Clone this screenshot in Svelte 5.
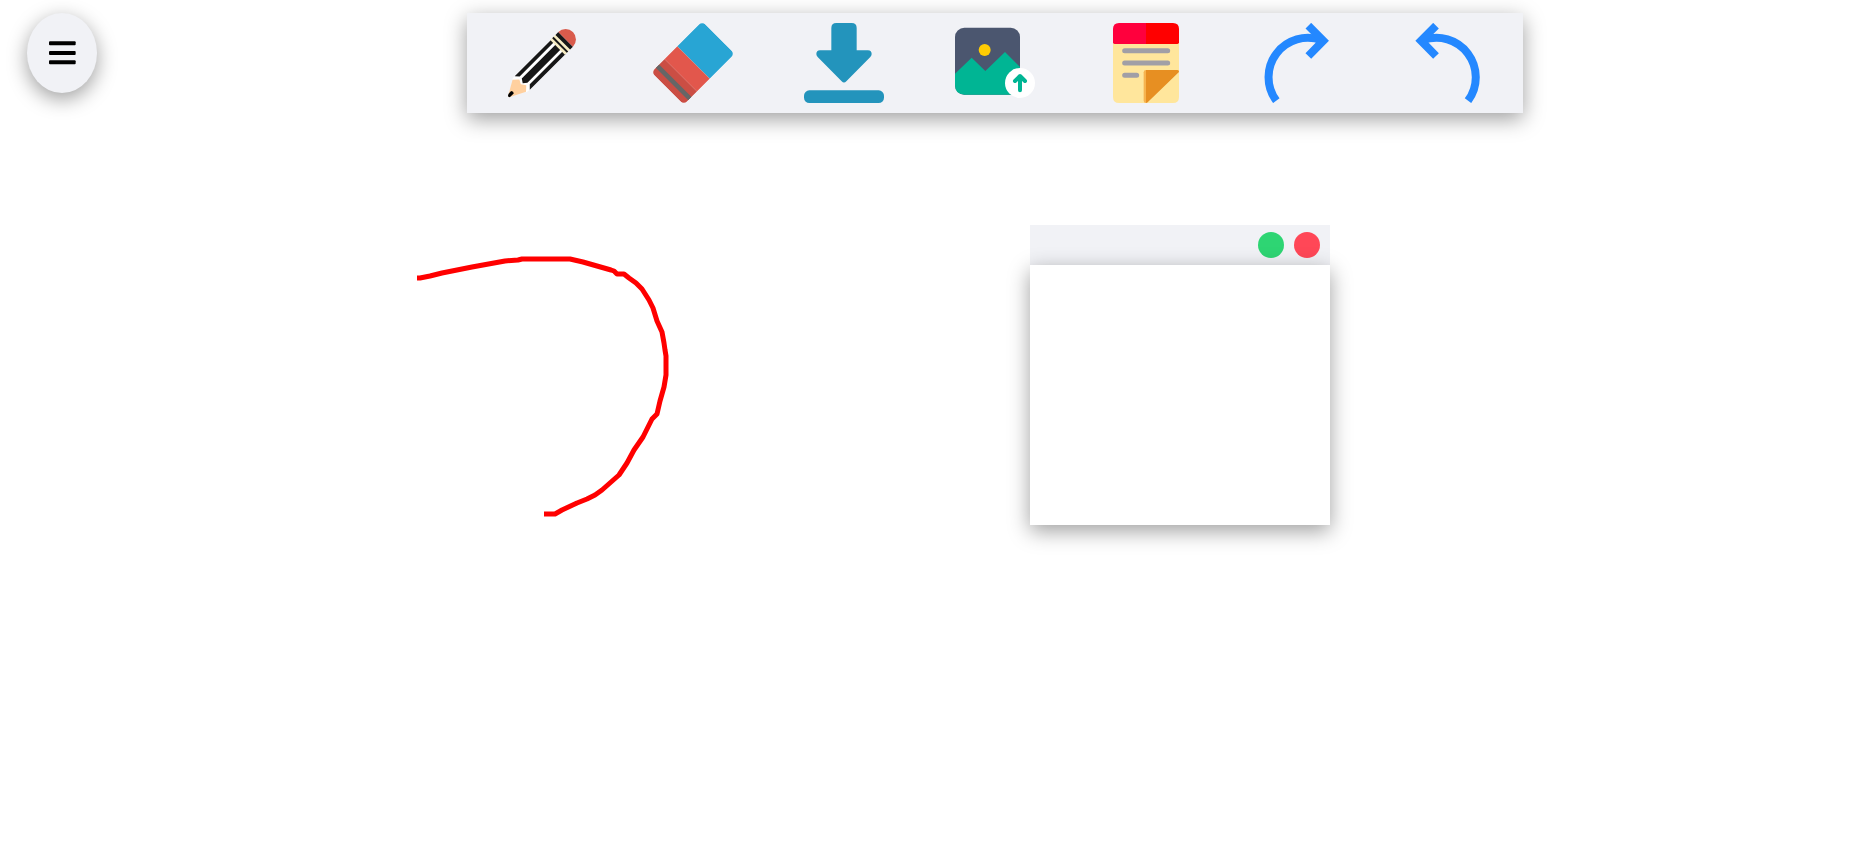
<script>
  const tools = [
    { id: 'pencil', label: 'Pencil', box: '156 69 240 240' },
    { id: 'eraser', label: 'Eraser', box: '69 69 240 240' },
    { id: 'download', label: 'Download', box: '72 69 240 240' },
    { id: 'upload', label: 'Upload image', box: '75 69 240 240' },
    { id: 'note', label: 'Sticky note', box: '48 69 240 240' },
    { id: 'redo', label: 'Redo', box: '51 69 240 240' },
    { id: 'undo', label: 'Undo', box: '51 69 240 240' }
  ];

  // Points of the freehand line, in board pixels.
  const line = [
    [417, 278], [420, 278], [430, 276], [442, 273], [472, 267], [505, 261], [518, 260],
    [522, 259], [570, 259], [583, 262], [597, 266], [611, 270], [614, 271], [617, 274],
    [624, 274], [629, 278], [636, 283], [642, 289], [649, 300], [653, 308], [657, 321],
    [662, 332], [664, 343], [665, 350], [666, 356], [666, 375], [664, 387], [660, 401],
    [657, 414], [652, 419], [643, 437], [634, 450], [627, 463], [619, 475], [602, 490],
    [595, 495], [587, 499], [577, 503], [562, 510], [555, 514], [544, 514]
  ];
  const points = line.map((p) => p.join(',')).join(' ');
</script>

<main class="board">
  <svg class="drawing" aria-hidden="true">
    <polyline {points} fill="none" stroke="#f00" stroke-width="5" stroke-linejoin="round" />
  </svg>

  <header class="top">
    <button class="menu" aria-label="Menu">
      <svg viewBox="0 0 84 84" aria-hidden="true">
        <rect x="3" y="7" width="80" height="12" rx="3" />
        <rect x="3" y="36" width="80" height="12" rx="3" />
        <rect x="3" y="64" width="80" height="12" rx="3" />
      </svg>
    </button>

    <nav class="tools" aria-label="Tools">
      {#each tools as tool (tool.id)}
        <button class="tool" aria-label={tool.label}>
          <svg viewBox={tool.box} aria-hidden="true">
            {#if tool.id === 'pencil'}
              <g transform="translate(175 290) rotate(-45)">
                <path fill="#fff" d="M45-29 57-31H212V31H60L48 29Z" />
                <path fill="#ffd09f" d="M1-2 45-27 60-13 53 0 62 14 48 27 1 3Z" />
                <path fill="#000" d="M0-1Q3-7 18-6Q23 0 18 5L2 4Z" />
                <path fill="#171717" d="M57-30H212V-19H67ZM67-10H212V11H70L59 2ZM72 19H212V31H60Z" />
                <path fill="#f6ecc3" d="M209-31H234V31H209Z" />
                <path fill="#171717" d="M217-31H223V31H217ZM231-31H243V31H231Z" />
                <path fill="#d95b4c" d="M243-31A31 31 0 0 1 243 31Z" />
              </g>
            {:else if tool.id === 'eraser'}
              <clipPath id="eraser-body"><rect x="-108" y="-69" width="216" height="138" rx="14" /></clipPath>
              <g transform="translate(189 189) rotate(-45)">
                <g clip-path="url(#eraser-body)">
                  <path fill="#28a5d4" d="M2-69H108V69H2Z" />
                  <path fill="#e2574c" d="M-52-69H2V69H-52Z" />
                  <path fill="#cb4e44" d="M-108-69H-52V69H-108Z" />
                  <path fill="#666" d="M-89-69H-75V69H-89Z" />
                </g>
              </g>
            {:else if tool.id === 'download'}
              <g fill="#2394bc">
                <rect x="72" y="271" width="240" height="38" rx="16" />
                <path d="M154 84Q154 69 169 69H215Q230 69 230 84V151H264Q275 152 275 162Q275 167 271 171L199 244Q192 251 185 244L113 171Q109 167 109 162Q109 152 120 151H154Z" />
              </g>
            {:else if tool.id === 'upload'}
              <rect x="75" y="83" width="195" height="201" rx="28" fill="#4b566f" />
              <circle cx="164" cy="150" r="18" fill="#ffcc03" />
              <path fill="#00b594" d="M75 221 125 173 166 213 225 156 270 201V284H103Q75 283 75 256Z" />
              <circle cx="270" cy="249" r="45" fill="#fff" />
              <path d="M270 271V230M255 243 270 228 285 243" fill="none" stroke="#00b594" stroke-width="12" stroke-linecap="round" stroke-linejoin="round" />
            {:else if tool.id === 'note'}
              <path fill="#ffe69c" d="M69 128H267V216L170 309H87Q69 309 69 291Z" />
              <path fill="#ff003d" d="M69 87Q69 69 87 69H168V132H74Q69 132 69 127Z" />
              <path fill="#f00" d="M168 69H249Q267 69 267 87V127Q267 132 262 132H168Z" />
              <path d="M104 152H233M104 189H233M104 226H140" stroke="#a19fa6" stroke-width="15" stroke-linecap="round" />
              <path fill="#ffe69c" d="M168 309 267 216V291Q267 309 249 309Z" />
              <path fill="#f6b34f" d="M168 210Q161 210 161 217V302Q161 309 168 309Z" />
              <path fill="#e78f22" d="M168 210H262Q268 210 267 216L173 307Q171 309 168 309Z" />
            {:else}
              <g transform={tool.id === 'undo' ? 'translate(340 0) scale(-1 1)' : undefined} fill="none" stroke="#2488ff" stroke-width="24">
                <path d="M109 302A118 118 0 0 1 245 121" />
                <path d="M205 77 250 122 205 168" />
              </g>
            {/if}
          </svg>
        </button>
      {/each}
    </nav>
  </header>

  <section class="sticky" aria-label="Note">
    <div class="bar">
      <button class="dot minimize" aria-label="Minimize"></button>
      <button class="dot close" aria-label="Close"></button>
    </div>
    <textarea class="body" aria-label="Note text"></textarea>
  </section>
</main>

<style>
  :global(body) {
    background: #fff;
    font-family: 'Liberation Sans', sans-serif;
  }

  .board {
    --panel: #f1f2f6;
    --shadow: 0 6px 20px rgba(0, 0, 0, 0.38);
    position: relative;
    min-height: 100vh;
    overflow: hidden;
  }

  button {
    padding: 0;
    border: 0;
    cursor: pointer;
  }

  .drawing {
    position: absolute;
    inset: 0;
    width: 100%;
    height: 100%;
  }

  .top {
    position: relative;
    display: grid;
    grid-template-columns: 25vw minmax(0, 1fr) 344px;
    align-items: start;
    padding-top: 13px;
  }

  .menu {
    display: grid;
    place-items: center;
    width: 70px;
    height: 80px;
    margin-left: 27px;
    border-radius: 50%;
    background: var(--panel);
    box-shadow: var(--shadow);
  }

  .menu svg {
    width: 28px;
    height: 28px;
  }

  .tools {
    display: flex;
    justify-content: space-around;
    padding: 10px 0;
    background: var(--panel);
    box-shadow: var(--shadow);
  }

  .tool {
    flex: 0 1 80px;
    min-width: 0;
    background: none;
  }

  .tool svg {
    display: block;
    width: 100%;
    height: 80px;
  }

  .sticky {
    position: absolute;
    left: 1030px;
    top: 225px;
    width: 300px;
  }

  .bar {
    display: flex;
    align-items: center;
    justify-content: flex-end;
    gap: 10px;
    height: 40px;
    padding: 0 10px;
    background: var(--panel);
  }

  .dot {
    width: 26px;
    height: 26px;
    border-radius: 50%;
  }

  .minimize {
    background: #2ed573;
  }

  .close {
    background: #ff4757;
  }

  .body {
    position: relative;
    display: block;
    box-sizing: border-box;
    width: 100%;
    height: 260px;
    padding: 10px;
    border: 0;
    outline: 0;
    resize: none;
    background: #fff;
    font: 16px/20px 'Liberation Sans', sans-serif;
    box-shadow: var(--shadow);
  }
</style>
